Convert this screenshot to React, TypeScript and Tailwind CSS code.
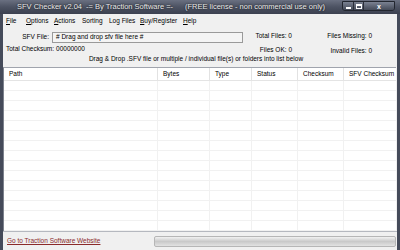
import React from "react";

const cols = [
  { name: "Path", w: 154 },
  { name: "Bytes", w: 52 },
  { name: "Type", w: 42 },
  { name: "Status", w: 46 },
  { name: "Checksum", w: 46 },
  { name: "SFV Checksum", w: 52 },
];

const menus = [
  { t: "File", u: "F", x: 3 },
  { t: "Options", u: "O", x: 23 },
  { t: "Actions", u: "A", x: 51 },
  { t: "Sorting", u: "", x: 79 },
  { t: "Log Files", u: "", x: 106 },
  { t: "Buy/Register", u: "B", x: 137 },
  { t: "Help", u: "H", x: 180 },
];

export default function App() {
  const rows = Array.from({ length: 15 });
  return (
    <div
      className="w-[400px] h-[250px] flex flex-col bg-[#454b5a] overflow-hidden"
      style={{ fontFamily: '"Liberation Sans", Arial, sans-serif' }}
    >
      {/* Title bar */}
      <div className="h-[14px] flex items-center bg-gradient-to-b from-[#6a7081] via-[#4c5262] to-[#3c4150] relative shrink-0">
        <span className="text-[7.5px] text-[#ececec] ml-[17px] w-[69px] whitespace-pre leading-none [text-shadow:0_0_2px_#000]">
          SFV Checker v2.04
        </span>
        <span className="text-[7.5px] text-[#ececec] w-[99px] whitespace-pre leading-none [text-shadow:0_0_2px_#000]">
          -= By Traction Software =-
        </span>
        <span className="text-[7.5px] text-[#ececec] whitespace-pre leading-none [text-shadow:0_0_2px_#000]">
          (FREE license - non commercial use only)
        </span>
        <div className="absolute right-[5px] top-[1px] flex h-[10px] rounded-b-[3px] border border-[#22262f] overflow-hidden">
          <div className="w-[11px] h-full flex items-center justify-center bg-gradient-to-b from-[#7b8292] to-[#444a58] border-r border-[#2a2e38]">
            <div className="w-[5px] h-[2px] bg-white mt-[3px]" />
          </div>
          <div className="w-[10px] h-full flex items-center justify-center bg-gradient-to-b from-[#7b8292] to-[#444a58] border-r border-[#2a2e38]">
            <div className="w-[6px] h-[5px] border border-white border-t-2" />
          </div>
          <div className="w-[30px] h-full flex items-center justify-center bg-gradient-to-b from-[#7b8292] to-[#444a58]">
            <span className="text-[7px] font-bold text-white leading-none">x</span>
          </div>
        </div>
      </div>

      {/* Client */}
      <div className="flex-1 mx-[3px] mb-[3px] flex flex-col bg-[#f0f0f0] text-[6.5px] text-black leading-none">
        {/* Menu */}
        <div className="h-[14px] flex items-center relative shrink-0 bg-[#f0f0f0]">
          {menus.map((m) => (
            <span key={m.t} className="absolute whitespace-pre" style={{ left: m.x }}>
              {m.u ? (
                <>
                  <span className="underline">{m.t.slice(0, 1)}</span>
                  {m.t.slice(1)}
                </>
              ) : (
                m.t
              )}
            </span>
          ))}
        </div>

        {/* Top area */}
        <div className="flex h-[25px] shrink-0">
          <div className="flex flex-col w-[246px]">
            <div className="flex items-center h-[15px] pt-[3px]">
              <span className="w-[46px] text-right pr-[0px]">SFV File:</span>
              <div className="ml-[3px] w-[191px] h-[11px] border border-[#9a9a9a] bg-[#f4f4f4] flex items-center pl-[3px]">
                # Drag and drop sfv file here #
              </div>
            </div>
            <div className="flex items-center h-[10px] pl-[3px] pt-[2px]">
              <span>Total Checksum:</span>
              <span className="ml-[2px]">00000000</span>
            </div>
          </div>
          <div className="grid grid-cols-[43px_80px] grid-rows-[14px_14px] mt-[1px]">
            <span className="text-right self-center">Total Files: 0</span>
            <span className="text-right self-center">Files Missing: 0</span>
            <span className="text-right self-center mt-[1px]">Files OK: 0</span>
            <span className="text-right self-center mt-[2px]">Invalid Files: 0</span>
          </div>
        </div>

        <div className="h-[14px] flex items-center justify-center shrink-0 pr-[8px] pb-[2px]">
          Drag &amp; Drop .SFV file or multiple / individual file(s) or folders into list below
        </div>

        {/* List view */}
        <div className="flex-1 border-t border-[#a0a4ad] border-l border-l-[#7d828d] bg-white flex flex-col overflow-hidden mr-[1px]">
          <div className="flex h-[13px] shrink-0 border-b border-[#e4e4e4] bg-white">
            {cols.map((c, i) => (
              <div
                key={c.name}
                className={`flex items-center pl-[5px] h-full ${i < cols.length - 1 ? "border-r border-[#e2e2e2]" : ""}`}
                style={{ width: c.w }}
              >
                {c.name}
              </div>
            ))}
          </div>
          <div className="flex-1 relative">
            {rows.map((_, r) => (
              <div key={r} className="flex h-[10px] border-b border-[#f1f1f1]">
                {cols.map((c, i) => (
                  <div
                    key={c.name}
                    className={`h-full ${i < cols.length - 1 ? "border-r border-[#f1f1f1]" : ""}`}
                    style={{ width: c.w }}
                  />
                ))}
              </div>
            ))}
          </div>
        </div>

        {/* Status bar */}
        <div className="h-[19px] shrink-0 flex items-center border-t border-[#b5b8bf] bg-[#f0f0f0]">
          <span className="ml-[4px] w-[147px] text-[#8a2a2a] underline">Go to Traction Software Website</span>
          <div className="flex-1 h-[11px] mr-[1px] rounded-[2px] border border-[#b6b6b6] bg-gradient-to-b from-[#f2f2f2] via-[#c9c9c9] to-[#e2e2e2]" />
        </div>
      </div>
    </div>
  );
}
